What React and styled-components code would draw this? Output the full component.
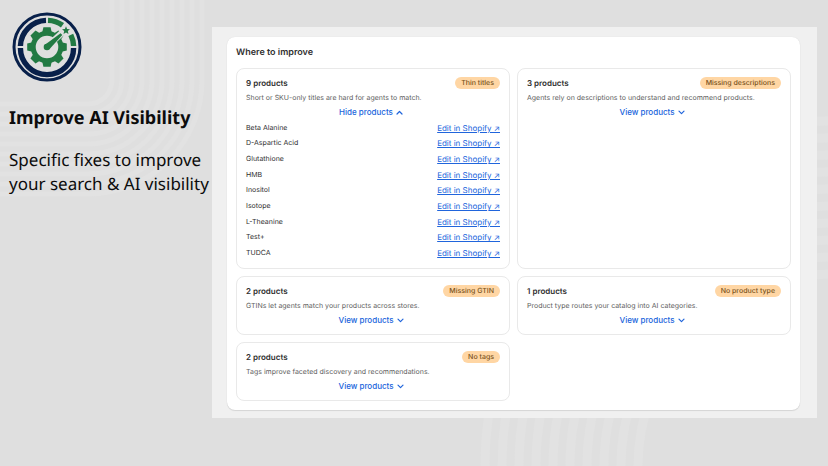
import React, { useState } from 'react';
import styled, { createGlobalStyle } from 'styled-components';

const GlobalStyle = createGlobalStyle`
  * {
    box-sizing: border-box;
  }

  body {
    margin: 0;
    background: #dfdfdf;
    font-family: Inter, sans-serif;
    color: #303030;
    text-rendering: geometricPrecision;
  }
`;

const Page = styled.div`
  position: relative;
  display: grid;
  grid-template-columns: 212px minmax(0, 1fr);
  align-items: start;
  min-height: 100vh;
  padding-right: 11px;
  overflow: hidden;
`;

const Pattern = styled.svg`
  position: absolute;
  fill: none;
  stroke: #e2e2e2;
  pointer-events: none;
`;

const TopPattern = styled(Pattern)`
  top: 0;
  left: 0;
`;

const BottomPattern = styled(Pattern)`
  right: 0;
  bottom: 0;
`;

const Intro = styled.header`
  position: relative;
  padding: 12px 0 0 9px;
  font-family: 'Noto Sans', sans-serif;
  color: #0c0c0c;
  white-space: nowrap;
`;

const Logo = styled.svg`
  display: block;
  width: 70px;
  height: 70px;
  margin-left: 3px;
`;

const Headline = styled.h1`
  margin: 24px 0 0;
  font-size: 18px;
  line-height: 24px;
  font-weight: 700;
`;

const Lead = styled.p`
  margin: 18px 0 0;
  font-size: 17px;
  line-height: 24px;
`;

const Panel = styled.main`
  position: relative;
  margin-top: 27px;
  padding: 10px 17px 8px 15px;
  background: #f0f0f0;
`;

const Section = styled.section`
  padding: 9px;
  background: #fff;
  border-radius: 8px;
  box-shadow: 0 1px 1px rgba(0, 0, 0, 0.1), 0 0 1px rgba(0, 0, 0, 0.12);
`;

const SectionTitle = styled.h2`
  margin: 0 0 9px;
  font-size: 9px;
  line-height: 13px;
  font-weight: 600;
`;

const CardGrid = styled.div`
  display: grid;
  grid-template-columns: repeat(2, minmax(0, 1fr));
  gap: 7px;
`;

const Card = styled.article`
  padding: 8px 9px 7px;
  border: 1px solid #e9e9e9;
  border-radius: 8px;
`;

const CardHeader = styled.div`
  display: flex;
  align-items: center;
  justify-content: space-between;
`;

const Count = styled.h3`
  margin: 0;
  font-size: 8px;
  line-height: 12px;
  font-weight: 600;
`;

const Badge = styled.span`
  padding: 0 6px;
  border-radius: 6px;
  background: #ffd6a4;
  color: #7a5320;
  font-size: 7px;
  line-height: 12px;
  font-weight: 500;
`;

const Description = styled.p`
  margin: 3px 0 2px;
  font-size: 7px;
  line-height: 11px;
  color: #616161;
`;

const Toggle = styled.button`
  display: flex;
  align-items: center;
  gap: 3px;
  height: 14px;
  margin: 0 auto;
  padding: 0 4px 0 0;
  border: none;
  background: none;
  color: #2065dc;
  font-family: inherit;
  font-size: 8px;
  line-height: 14px;
  font-weight: 500;
  cursor: pointer;
`;

const Chevron = styled.svg`
  width: 7px;
  height: 5px;
  fill: none;
  stroke: currentColor;
  stroke-width: 1.2;
  stroke-linecap: round;
  stroke-linejoin: round;
`;

const ProductList = styled.ul`
  display: grid;
  grid-auto-rows: 1fr;
  align-items: center;
  min-height: 141px;
  margin: 1px 0 0;
  padding: 0;
  list-style: none;
`;

const Product = styled.li`
  display: flex;
  align-items: center;
  justify-content: space-between;
  font-size: 7px;
  line-height: 12px;
`;

const EditLink = styled.a`
  color: #2065dc;
  font-size: 8px;
  text-decoration: underline;
`;

const issues = [
  {
    id: 'titles',
    count: 9,
    badge: 'Thin titles',
    text: 'Short or SKU-only titles are hard for agents to match.',
    products: [
      'Beta Alanine',
      'D-Aspartic Acid',
      'Glutathione',
      'HMB',
      'Inositol',
      'Isotope',
      'L-Theanine',
      'Test+',
      'TUDCA'
    ]
  },
  {
    id: 'descriptions',
    count: 3,
    badge: 'Missing descriptions',
    text: 'Agents rely on descriptions to understand and recommend products.'
  },
  {
    id: 'gtin',
    count: 2,
    badge: 'Missing GTIN',
    text: 'GTINs let agents match your products across stores.'
  },
  {
    id: 'type',
    count: 1,
    badge: 'No product type',
    text: 'Product type routes your catalog into AI categories.'
  },
  {
    id: 'tags',
    count: 2,
    badge: 'No tags',
    text: 'Tags improve faceted discovery and recommendations.'
  }
];

const rings = [0, 1, 2, 3, 4, 5, 6, 7, 8, 9];
const teeth = [0, 45, 90, 135, 180, 225, 270, 315];

const BrandLogo = () => (
  <Logo viewBox="0 0 70 70" role="img" aria-label="AI visibility logo">
    <g fill="none" stroke="#08204a">
      <circle cx="35" cy="35" r="33" strokeWidth="3" />
      <path d="M8.4 34A26.6 26.6 0 0 1 34 8.4M61.6 36A26.6 26.6 0 0 1 8.4 36" strokeWidth="5.4" />
    </g>
    <path
      d="M36 8.4A26.6 26.6 0 0 1 50.5 13.3M58.8 22.9A26.6 26.6 0 0 1 61.6 34"
      fill="none"
      stroke="#227a43"
      strokeWidth="5.4"
    />
    <circle cx="35" cy="35" r="13.8" fill="none" stroke="#227a43" strokeWidth="5" />
    {teeth.map((angle) => (
      <path
        key={angle}
        d="M30 21.5L31.4 15.2H38.6L40 21.5Z"
        fill="#227a43"
        transform={`rotate(${angle} 35 35)`}
      />
    ))}
    <path d="M37 33L53 18" stroke="#dfdfdf" strokeWidth="6.5" />
    <path d="M32.6 32.9L48.6 21.3L50.3 23L37.6 37Z" fill="#227a43" />
    <circle cx="35" cy="35" r="3.3" fill="#227a43" />
    <path
      d="M54 14.2L55.1 17L58 17.2L55.8 19.1L56.5 22L54 20.4L51.5 22L52.2 19.1L50 17.2L52.9 17Z"
      fill="#227a43"
    />
  </Logo>
);

const IssueCard = ({ issue, defaultOpen }) => {
  const [open, setOpen] = useState(defaultOpen);

  return (
    <Card>
      <CardHeader>
        <Count>{issue.count} products</Count>
        <Badge>{issue.badge}</Badge>
      </CardHeader>
      <Description>{issue.text}</Description>
      <Toggle type="button" aria-expanded={open} onClick={() => setOpen(!open)}>
        {open ? 'Hide products' : 'View products'}
        <Chevron viewBox="0 0 7 5" aria-hidden="true">
          <path d={open ? 'M1 4L3.5 1.5L6 4' : 'M1 1.2L3.5 3.7L6 1.2'} />
        </Chevron>
      </Toggle>
      {open && issue.products && (
        <ProductList>
          {issue.products.map((name) => (
            <Product key={name}>
              {name}
              <EditLink href="#edit">Edit in Shopify ↗</EditLink>
            </Product>
          ))}
        </ProductList>
      )}
    </Card>
  );
};

const App = () => (
  <>
    <GlobalStyle />
    <Page>
      <TopPattern width="212" height="200" strokeWidth="5" aria-hidden="true">
        {rings.map((i) => {
          const r = 24 + i * 10;
          return <path key={i} d={`M0 ${80 + r}H88A${r} ${r} 0 0 0 ${88 + r} 80V0`} />;
        })}
      </TopPattern>
      <BottomPattern width="352" height="352" strokeWidth="9" aria-hidden="true">
        {rings.map((i) => (
          <circle key={i} cx="354" cy="352" r={192 + i * 17} />
        ))}
      </BottomPattern>
      <Intro>
        <BrandLogo />
        <Headline>Improve AI Visibility</Headline>
        <Lead>
          Specific fixes to improve
          <br />
          your search &amp; AI visibility
        </Lead>
      </Intro>
      <Panel>
        <Section>
          <SectionTitle>Where to improve</SectionTitle>
          <CardGrid>
            {issues.map((issue) => (
              <IssueCard key={issue.id} issue={issue} defaultOpen={issue.id === 'titles'} />
            ))}
          </CardGrid>
        </Section>
      </Panel>
    </Page>
  </>
);

export default App;
